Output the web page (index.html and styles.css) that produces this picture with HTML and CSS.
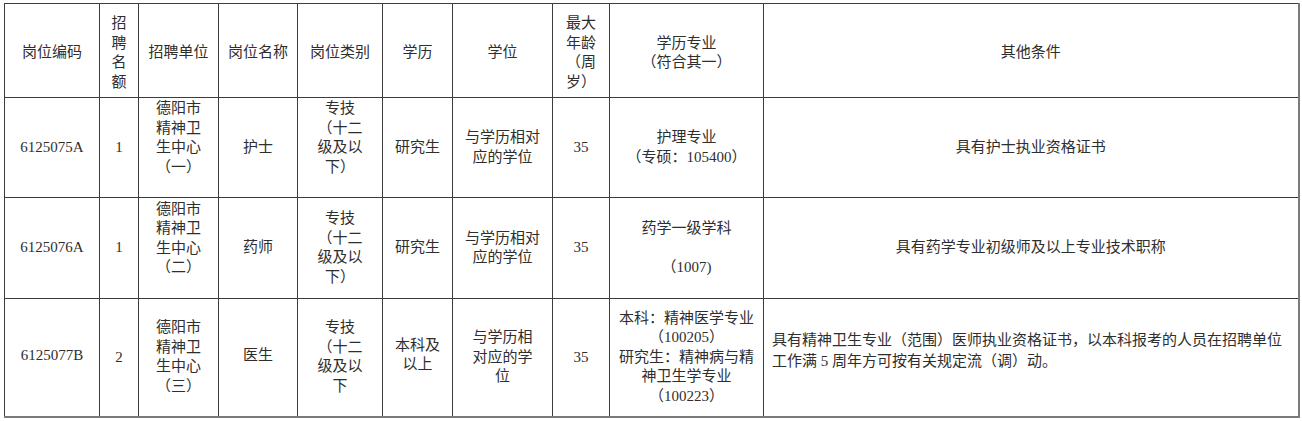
FILE: index.html
```html
<!DOCTYPE html>
<html lang="zh-CN">
<head>
<meta charset="utf-8">
<title>岗位表</title>
<link rel="stylesheet" href="styles.css">
</head>
<body>
<table class="jobs">
  <colgroup>
    <col class="c-code">
    <col class="c-num">
    <col class="c-unit">
    <col class="c-name">
    <col class="c-type">
    <col class="c-edu">
    <col class="c-deg">
    <col class="c-age">
    <col class="c-major">
    <col class="c-other">
  </colgroup>
  <thead>
    <tr class="r-head">
      <th>岗位编码</th>
      <th>招<br>聘<br>名<br>额</th>
      <th>招聘单位</th>
      <th>岗位名称</th>
      <th>岗位类别</th>
      <th>学历</th>
      <th>学位</th>
      <th>最大<br>年龄<br>（周<br>岁）</th>
      <th>学历专业<br>（符合其一）</th>
      <th>其他条件</th>
    </tr>
  </thead>
  <tbody>
    <tr class="r-1">
      <td>6125075A</td>
      <td>1</td>
      <td class="up">德阳市<br>精神卫<br>生中心<br>（一）</td>
      <td>护士</td>
      <td class="up">专技<br>（十二<br>级及以<br>下）</td>
      <td>研究生</td>
      <td>与学历相对<br>应的学位</td>
      <td>35</td>
      <td>护理专业<br>（专硕：105400）</td>
      <td>具有护士执业资格证书</td>
    </tr>
    <tr class="r-2">
      <td>6125076A</td>
      <td>1</td>
      <td class="up">德阳市<br>精神卫<br>生中心<br>（二）</td>
      <td>药师</td>
      <td>专技<br>（十二<br>级及以<br>下）</td>
      <td>研究生</td>
      <td>与学历相对<br>应的学位</td>
      <td>35</td>
      <td>药学一级学科<br><br>（1007)</td>
      <td>具有药学专业初级师及以上专业技术职称</td>
    </tr>
    <tr class="r-3">
      <td class="up-s">6125077B</td>
      <td>2</td>
      <td>德阳市<br>精神卫<br>生中心<br>（三）</td>
      <td class="up-s">医生</td>
      <td>专技<br>（十二<br>级及以<br>下</td>
      <td class="up-s">本科及<br>以上</td>
      <td>与学历相<br>对应的学<br>位</td>
      <td>35</td>
      <td>本科：精神医学专业<br>（100205）<br>研究生：精神病与精<br>神卫生学专业<br>（100223）</td>
      <td class="left up-m">具有精神卫生专业（范围）医师执业资格证书，以本科报考的人员在招聘单位<br>工作满 5 周年方可按有关规定流（调）动。</td>
    </tr>
  </tbody>
</table>
</body>
</html>
```

FILE: styles.css
```css
html, body {
  margin: 0;
  padding: 0;
  background: #ffffff;
}

body {
  padding: 3px 0 0 4px;
}

.jobs {
  border-collapse: collapse;
  table-layout: fixed;
  width: 1294px;
  font-family: "Liberation Serif", "Noto Sans CJK SC", serif;
  font-size: 15px;
  line-height: 19.5px;
  color: #2e2e2e;
}

.jobs th,
.jobs td {
  border: 1px solid #3c3c3c;
  padding: 0 2px;
  text-align: center;
  vertical-align: middle;
  font-weight: normal;
}

.jobs tr.r-3 td {
  border-bottom: 2px solid #7a7a7a;
}

.jobs th:last-child,
.jobs td:last-child {
  border-right: 2px solid #7a7a7a;
}

.c-code { width: 95px; }
.c-num { width: 39px; }
.c-unit { width: 80px; }
.c-name { width: 79px; }
.c-type { width: 85px; }
.c-edu { width: 70px; }
.c-deg { width: 100px; }
.c-age { width: 57px; }
.c-major { width: 154px; }
.c-other { width: 535px; }

.r-head { height: 94px; }
.r-head th { padding-top: 5px; }
.r-1 { height: 100px; }
.r-2 { height: 101px; }
.r-3 { height: 118px; }

.jobs td.up { padding-bottom: 19px; }
.jobs td.up-s { padding-bottom: 4px; }
.jobs td.up-m { padding-bottom: 12px; line-height: 21px; }

.jobs td.left {
  text-align: left;
  padding-left: 8px;
  padding-right: 4px;
}
```
